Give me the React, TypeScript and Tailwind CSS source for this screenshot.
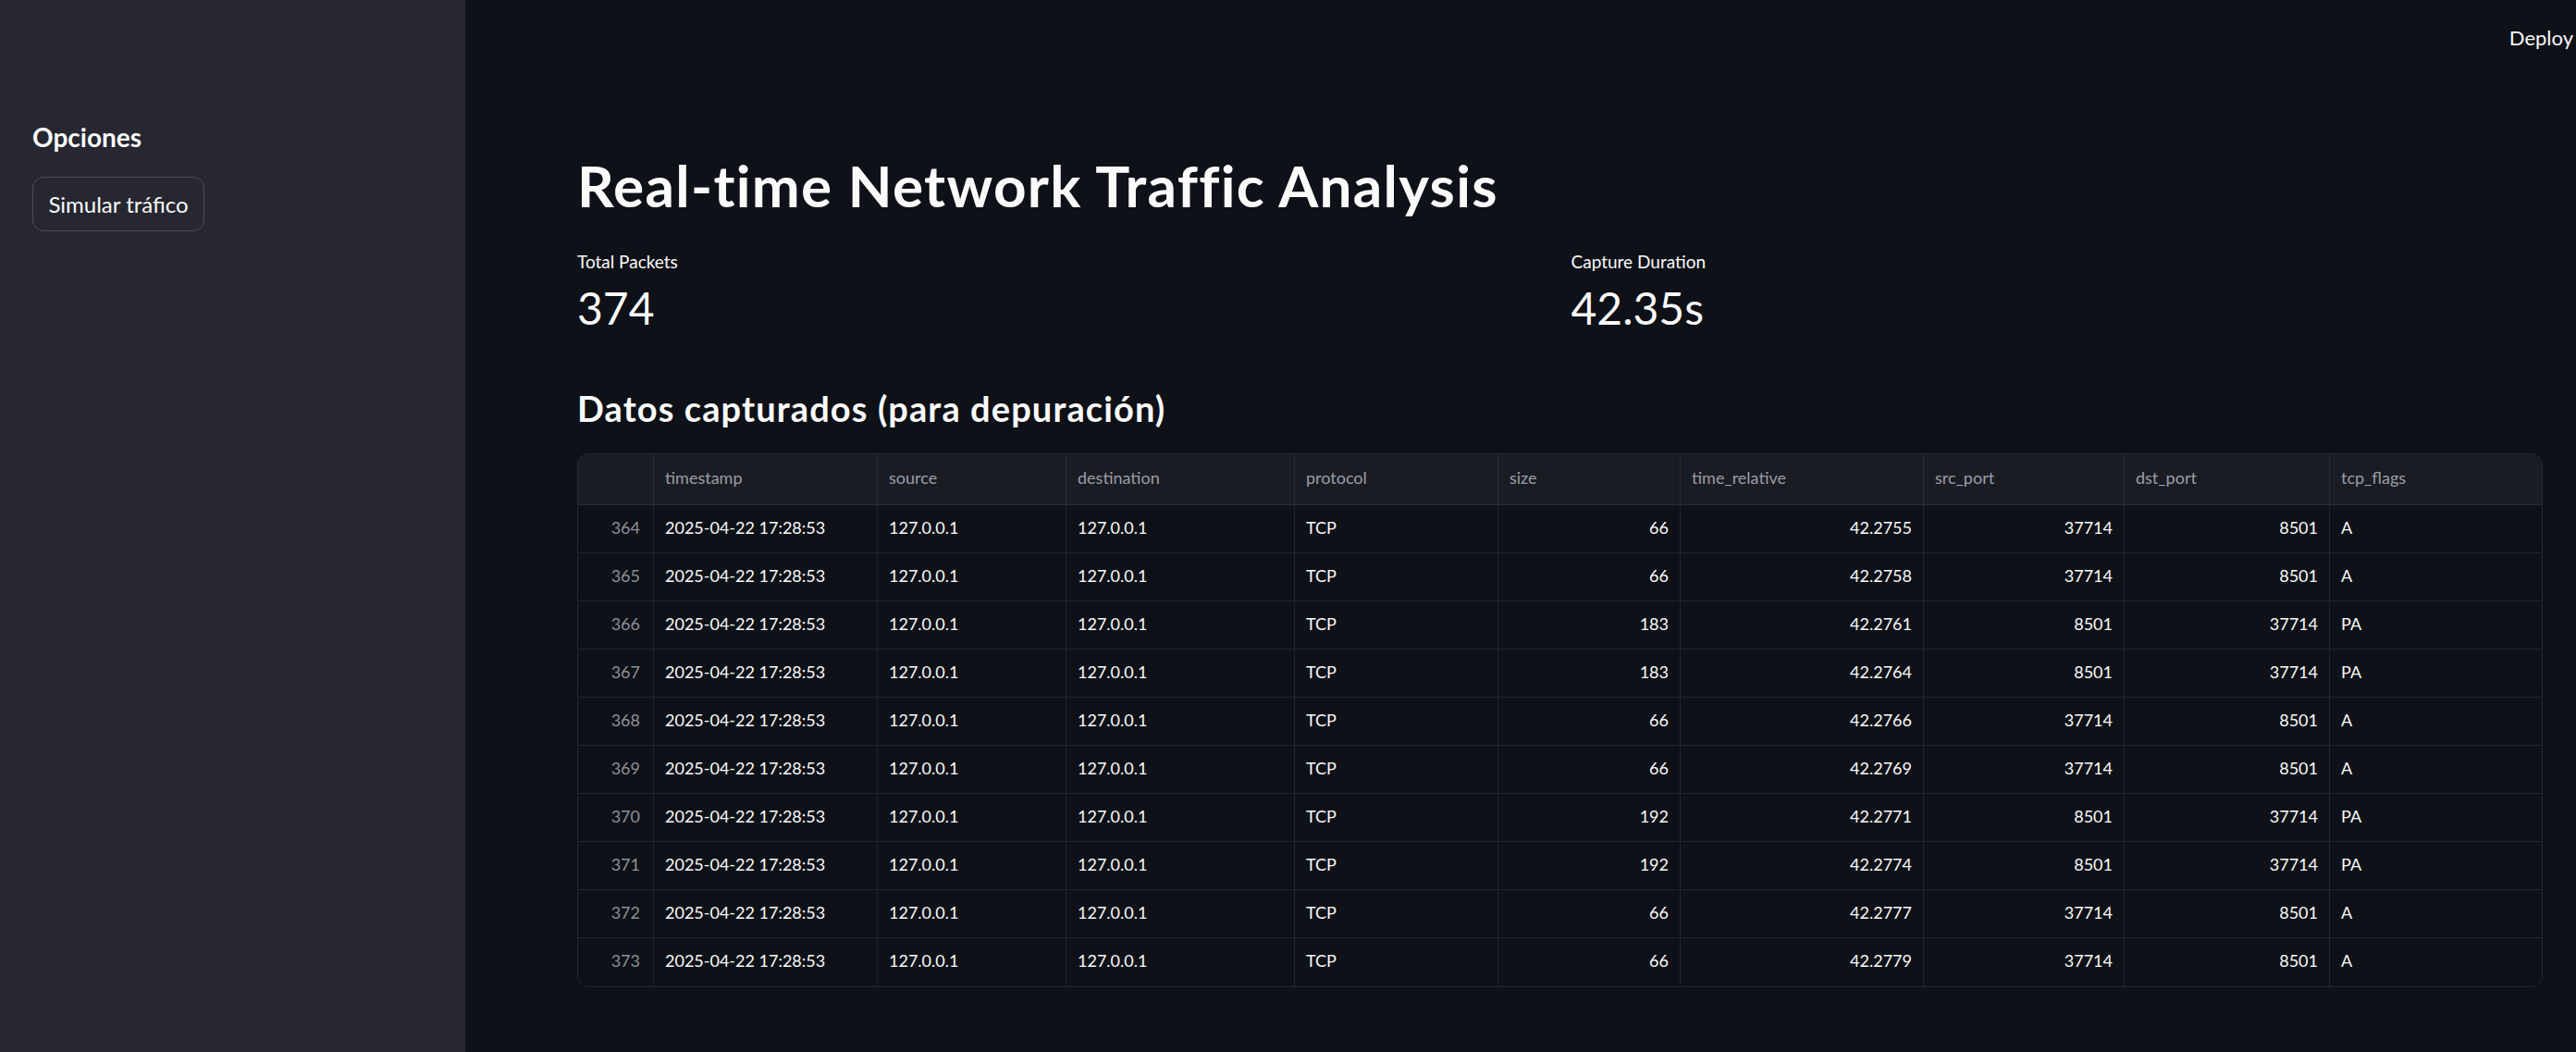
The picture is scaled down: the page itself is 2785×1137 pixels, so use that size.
import React from 'react';

type Row = {
  idx: number;
  size: number;
  rel: string;
  src: number;
  dst: number;
  flags: string;
};

const rows: Row[] = [
  { idx: 364, size: 66, rel: '42.2755', src: 37714, dst: 8501, flags: 'A' },
  { idx: 365, size: 66, rel: '42.2758', src: 37714, dst: 8501, flags: 'A' },
  { idx: 366, size: 183, rel: '42.2761', src: 8501, dst: 37714, flags: 'PA' },
  { idx: 367, size: 183, rel: '42.2764', src: 8501, dst: 37714, flags: 'PA' },
  { idx: 368, size: 66, rel: '42.2766', src: 37714, dst: 8501, flags: 'A' },
  { idx: 369, size: 66, rel: '42.2769', src: 37714, dst: 8501, flags: 'A' },
  { idx: 370, size: 192, rel: '42.2771', src: 8501, dst: 37714, flags: 'PA' },
  { idx: 371, size: 192, rel: '42.2774', src: 8501, dst: 37714, flags: 'PA' },
  { idx: 372, size: 66, rel: '42.2777', src: 37714, dst: 8501, flags: 'A' },
  { idx: 373, size: 66, rel: '42.2779', src: 37714, dst: 8501, flags: 'A' },
];

const headers = ['', 'timestamp', 'source', 'destination', 'protocol', 'size', 'time_relative', 'src_port', 'dst_port', 'tcp_flags'];

const gridCols = 'grid grid-cols-[82px_242px_204px_247px_220px_197px_263px_217px_222px_1fr]';

const Metric: React.FC<{ label: string; value: string }> = ({ label, value }) => (
  <div>
    <div className="text-[19px] leading-[19px] text-[#fafafa]">{label}</div>
    <div className="text-[48px] leading-[48px] text-[#fafafa] mt-[17px]">{value}</div>
  </div>
);

const App: React.FC = () => {
  return (
    <div className="flex w-full h-[1137px] overflow-hidden bg-[#0e1117] text-[#fafafa] font-['Lato','Noto_Sans',sans-serif]">
      {/* Sidebar */}
      <aside className="w-[503px] shrink-0 bg-[#262730] px-[35px] pt-[134px]">
        <h2 className="text-[28px] leading-[28px] font-bold text-[#fafafa]">Opciones</h2>
        <button className="mt-[29px] w-[186px] h-[59px] rounded-[12px] border border-[#4b4c56] text-[24px] text-[#fafafa] flex items-center justify-center">
          Simular tráfico
        </button>
      </aside>

      {/* Main */}
      <main className="flex-1 flex flex-col min-w-0">
        <header className="h-[82px] flex items-center justify-end pr-[3px]">
          <span className="text-[22px] leading-[22px] text-[#fafafa]">Deploy</span>
        </header>

        <div className="pl-[121px] pr-[36px] pt-[87px]">
          <h1 className="text-[62px] leading-[62px] font-bold tracking-[1.3px] text-[#fafafa]">Real-time Network Traffic Analysis</h1>

          <div className="grid grid-cols-2 gap-[24px] mt-[42px]">
            <Metric label="Total Packets" value="374" />
            <Metric label="Capture Duration" value="42.35s" />
          </div>

          <h3 className="mt-[65px] text-[38px] leading-[38px] font-bold tracking-[1.1px] text-[#fafafa]">Datos capturados (para depuración)</h3>

          <div className="mt-[30px] rounded-[12px] border border-[#26282f] overflow-hidden text-[18px]">
            <div className={`${gridCols} h-[55px] bg-[#1a1c24] border-b border-[#2a2c34]`}>
              {headers.map((h, i) => (
                <div
                  key={i}
                  className={`flex items-center px-[12px] pb-[3px] text-[#9b9ea6] ${i < headers.length - 1 ? 'border-r border-[#2a2c34]' : ''}`}
                >
                  {h}
                </div>
              ))}
            </div>
            {rows.map((r, ri) => {
              const cells: { v: string; right?: boolean; muted?: boolean }[] = [
                { v: String(r.idx), right: true, muted: true },
                { v: '2025-04-22 17:28:53' },
                { v: '127.0.0.1' },
                { v: '127.0.0.1' },
                { v: 'TCP' },
                { v: String(r.size), right: true },
                { v: r.rel, right: true },
                { v: String(r.src), right: true },
                { v: String(r.dst), right: true },
                { v: r.flags },
              ];
              return (
                <div
                  key={r.idx}
                  className={`${gridCols} h-[52px] bg-[#0e1117] ${ri < rows.length - 1 ? 'border-b border-[#23252c]' : ''}`}
                >
                  {cells.map((c, ci) => (
                    <div
                      key={ci}
                      className={`flex items-center px-[12px] pb-[3px] ${c.right ? 'justify-end' : ''} ${c.muted ? 'text-[#8d9099] pr-[14px]' : 'text-[#fafafa]'} ${ci < cells.length - 1 ? 'border-r border-[#23252c]' : ''}`}
                    >
                      {c.v}
                    </div>
                  ))}
                </div>
              );
            })}
          </div>
        </div>
      </main>
    </div>
  );
};

export default App;
